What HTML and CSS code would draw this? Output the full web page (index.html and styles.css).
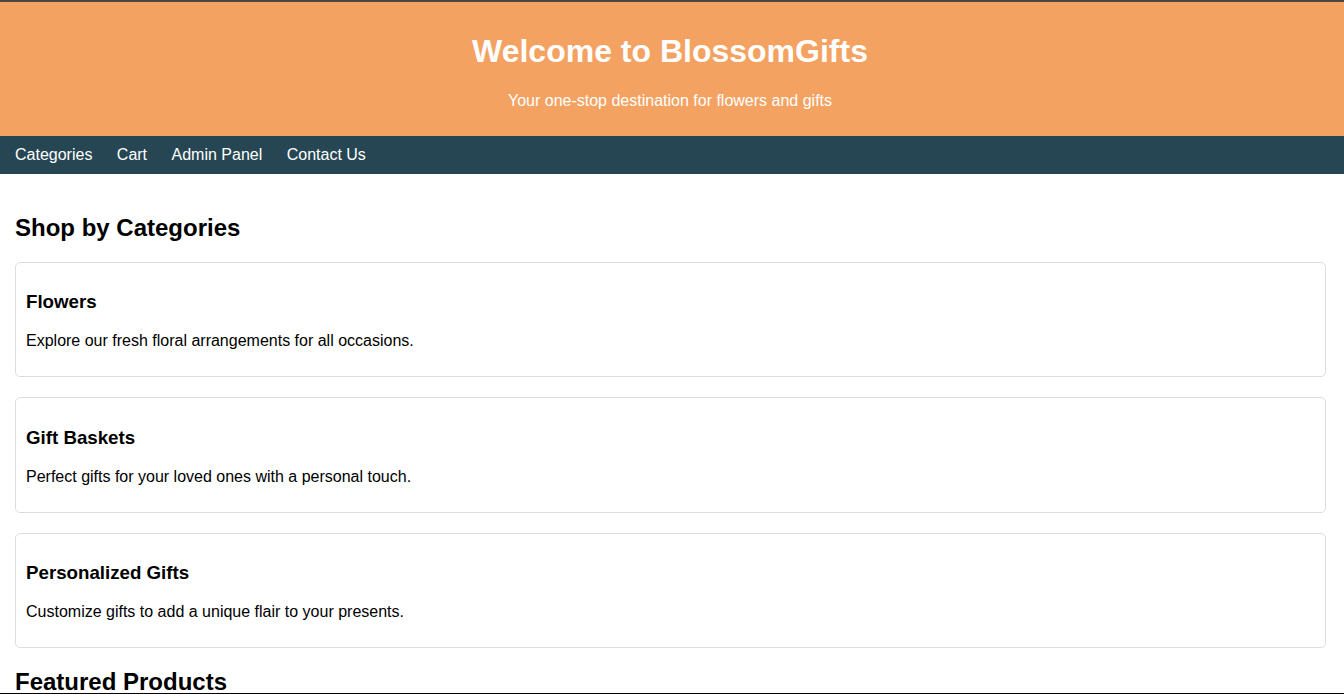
FILE: index.html
```html
<!DOCTYPE html>
<html lang="en">
<head>
<meta charset="utf-8">
<title>BlossomGifts</title>
<link rel="stylesheet" href="styles.css">
</head>
<body>
<header class="site-header">
  <h1>Welcome to BlossomGifts</h1>
  <p>Your one-stop destination for flowers and gifts</p>
</header>
<nav class="site-nav">
  <a href="#">Categories</a>
  <a href="#">Cart</a>
  <a href="#">Admin Panel</a>
  <a href="#">Contact Us</a>
</nav>
<main class="content">
  <h2>Shop by Categories</h2>
  <div class="card">
    <h3>Flowers</h3>
    <p>Explore our fresh floral arrangements for all occasions.</p>
  </div>
  <div class="card">
    <h3>Gift Baskets</h3>
    <p>Perfect gifts for your loved ones with a personal touch.</p>
  </div>
  <div class="card">
    <h3>Personalized Gifts</h3>
    <p>Customize gifts to add a unique flair to your presents.</p>
  </div>
  <h2>Featured Products</h2>
  <div class="card">
    <h3>Rose Bouquet</h3>
    <p>A classic bouquet of fresh red roses.</p>
  </div>
</main>
<div class="frame-bottom"></div>
</body>
</html>
```

FILE: styles.css
```css
html, body {
  margin: 0;
  padding: 0;
}
body {
  font-family: "Liberation Sans", Arial, sans-serif;
  color: #000;
  background: #fff;
}
.site-header {
  background: #f4a261;
  color: #fff;
  text-align: center;
  padding: 10px 14px 10px 10px;
  border-top: 2px solid #474747;
}
.site-header h1 {
  font-size: 32px;
  margin: 21.44px 0;
}
.site-header p {
  font-size: 16px;
  margin: 16px 0;
}
.site-nav {
  background: #264653;
  padding: 10px 15px;
}
.site-nav a {
  color: #fff;
  text-decoration: none;
  font-size: 16px;
  margin-right: 20px;
}
.content {
  padding: 20px 18px 20px 15px;
}
.content h2 {
  font-size: 24px;
  margin: 19.92px 0;
}
.card {
  border: 1px solid #ddd;
  border-radius: 5px;
  padding: 10px;
  margin-bottom: 20px;
}
.card h3 {
  font-size: 18.72px;
  margin: 18.72px 0;
}
.card p {
  font-size: 16px;
  margin: 16px 0;
}
.frame-bottom {
  position: fixed;
  left: 0;
  right: 0;
  bottom: 0;
  height: 1px;
  background: #000;
}
```
